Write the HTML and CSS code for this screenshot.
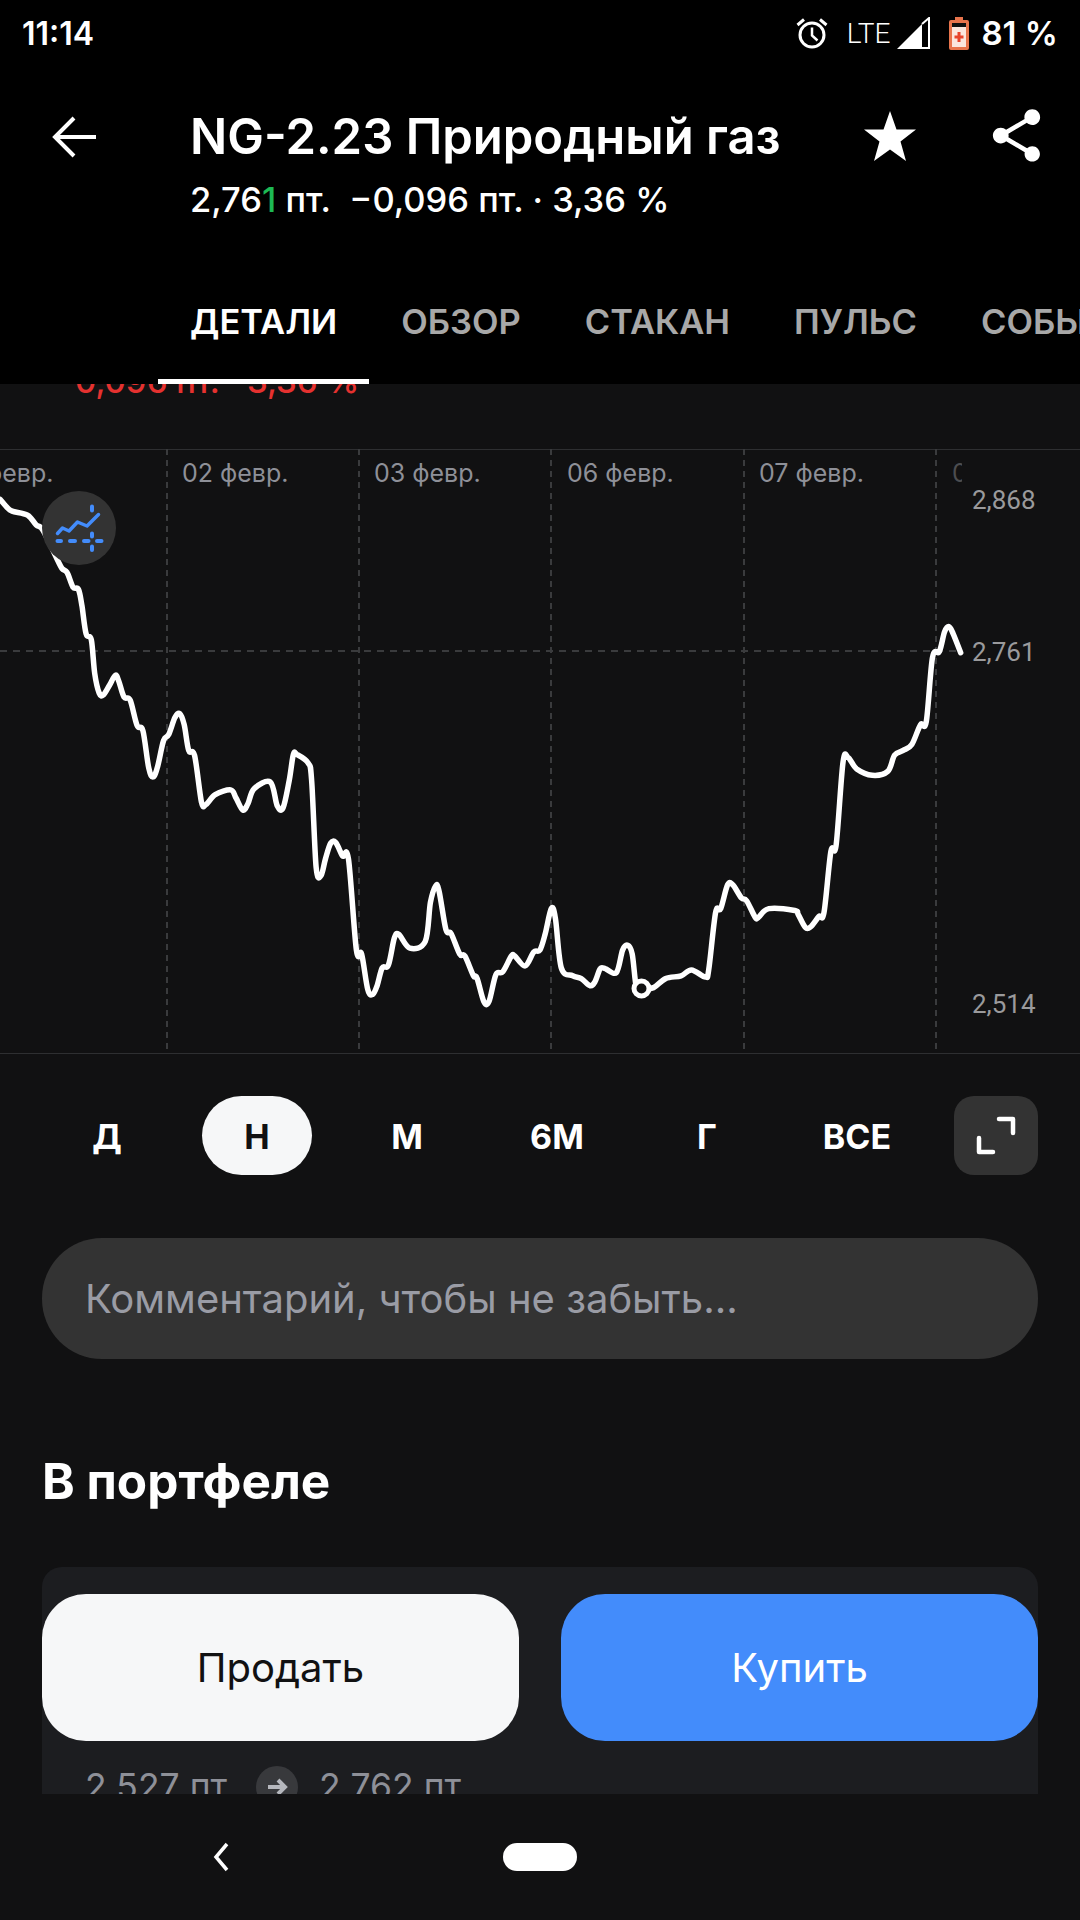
FILE: index.html
```html
<!DOCTYPE html>
<html lang="ru">
<head>
  <meta charset="UTF-8">
  <meta name="viewport" content="width=device-width, initial-scale=1.0">
  <title>NG-2.23 Природный газ</title>
  <link rel="stylesheet" href="styles.css">
</head>
<body>

<div class="app">

  <!-- Header -->
  <header class="header">
    <div class="status-bar">
      <span class="status-time">11:14</span>
      <div class="status-icons">
        <svg class="icon-alarm" width="34" height="34" viewBox="0 0 34 34">
          <circle cx="17" cy="19" r="12" fill="none" stroke="#fff" stroke-width="3"/>
          <path d="M17 11.500V19.500L22.500 24.500" fill="none" stroke="#fff" stroke-width="2.500"/>
          <path d="M2.500 9L9 3.500M31.500 9L25 3.500" fill="none" stroke="#fff" stroke-width="3"/>
        </svg>
        <span class="status-lte">LTE</span>
        <svg class="icon-signal" width="33" height="32" viewBox="0 0 33 32">
          <path d="M0 32L25 7V32Z" fill="#fff"/>
          <path d="M25 7L32 1V31H25" fill="none" stroke="#fff" stroke-width="2"/>
        </svg>
        <svg class="icon-battery" width="20" height="33" viewBox="0 0 20 33">
          <path d="M6 0H14V3H18Q20 3 20 5V31Q20 33 18 33H2Q0 33 0 31V5Q0 3 2 3H6Z" fill="#e8744c"/>
          <rect x="3" y="6" width="14" height="4" fill="#111"/>
          <rect x="3" y="10" width="14" height="20" fill="#fbe6de"/>
          <path d="M10 15V25M5.500 20H14.500" stroke="#e8442c" stroke-width="3"/>
        </svg>
        <span class="status-battery">81 %</span>
      </div>
    </div>

    <div class="topbar">
      <svg class="icon-back" width="47" height="44" viewBox="0 0 47 44">
        <path d="M45 22H5M23 3L4 22L23 41" fill="none" stroke="#fff" stroke-width="4"/>
      </svg>
      <div class="titles">
        <h1>NG-2.23 Природный газ</h1>
        <p class="quote">2,76<span class="quote-tick">1</span> пт.&nbsp;&nbsp;−0,096 пт. · 3,36 %</p>
      </div>
      <svg class="icon-star" width="52" height="50" viewBox="0 0 52 50">
        <path d="M26 0L32.500 18.500H52L36.500 30.500L42 50L26 38.500L10 50L15.500 30.500L0 18.500H19.500Z" fill="#fff"/>
      </svg>
      <svg class="icon-share" width="63" height="63" viewBox="0 0 24 24">
        <path fill="#fff" d="M18 16.080c-.76 0-1.440.3-1.960.77L8.910 12.700c.05-.23.09-.46.09-.7s-.04-.47-.09-.7l7.050-4.110c.54.5 1.250.81 2.040.81 1.660 0 3-1.340 3-3s-1.340-3-3-3-3 1.340-3 3c0 .24.04.47.09.7L8.040 9.810C7.500 9.310 6.790 9 6 9c-1.660 0-3 1.340-3 3s1.340 3 3 3c.79 0 1.500-.31 2.040-.81l7.120 4.160c-.05.21-.08.43-.08.65 0 1.610 1.310 2.920 2.920 2.920 1.610 0 2.920-1.310 2.920-2.920s-1.310-2.920-2.920-2.920z"/>
      </svg>
    </div>

    <nav class="tabs">
      <span class="tab active">ДЕТАЛИ</span>
      <span class="tab">ОБЗОР</span>
      <span class="tab">СТАКАН</span>
      <span class="tab">ПУЛЬС</span>
      <span class="tab">СОБЫТИЯ</span>
    </nav>
  </header>

  <!-- Scrolled content -->
  <main class="content">
    <p class="change">−0,096 пт. · 3,36 %</p>

    <div class="chart">
      <svg class="chart-svg" width="1080" height="605" viewBox="0 0 1080 605">
        <g class="grid-v">
          <line x1="167" y1="0" x2="167" y2="605"/>
          <line x1="359" y1="0" x2="359" y2="605"/>
          <line x1="551" y1="0" x2="551" y2="605"/>
          <line x1="744" y1="0" x2="744" y2="605"/>
          <line x1="936" y1="0" x2="936" y2="605"/>
        </g>
        <line class="grid-h" x1="0" y1="202" x2="962" y2="202"/>
        <path id="priceLine" class="price-line" d=""/>
        <circle class="price-dot" cx="641.500" cy="539.500" r="7.500"/>
      </svg>

      <div class="dates">
        <span class="date">01 февр.</span>
        <span class="date">02 февр.</span>
        <span class="date">03 февр.</span>
        <span class="date">06 февр.</span>
        <span class="date">07 февр.</span>
        <span class="date">08 февр.</span>
      </div>

      <span class="price-label label-high">2,868</span>
      <span class="price-label label-now">2,761</span>
      <span class="price-label label-low">2,514</span>

      <div class="indicator-btn">
        <svg width="74" height="74" viewBox="0 0 74 74">
          <path d="M15.500 42.500L20.500 37L27 40L35.500 31L45 35L56.500 23.500" fill="none" stroke="#438cfb" stroke-width="3.500" stroke-linecap="round" stroke-linejoin="round"/>
          <path d="M15.500 50H19M28 50H33M42 50H46.500M55 50H59.500M50 15.500V19.500M50 42.500V45.500M50 55.500V59" fill="none" stroke="#438cfb" stroke-width="4" stroke-linecap="round"/>
        </svg>
      </div>
    </div>

    <div class="periods">
      <span class="period">Д</span>
      <span class="period active">Н</span>
      <span class="period">М</span>
      <span class="period">6М</span>
      <span class="period">Г</span>
      <span class="period">ВСЕ</span>
      <div class="expand-btn">
        <svg width="84" height="79" viewBox="0 0 84 79">
          <path d="M45 23H59V37M25 42V56H39" fill="none" stroke="#fff" stroke-width="4.500" stroke-linecap="round" stroke-linejoin="round"/>
        </svg>
      </div>
    </div>

    <div class="comment">Комментарий, чтобы не забыть...</div>

    <h2>В портфеле</h2>

    <div class="card">
      <div class="actions">
        <button class="btn btn-sell">Продать</button>
        <button class="btn btn-buy">Купить</button>
      </div>
      <div class="range">
        <span>2,527 пт.</span>
        <span class="range-arrow">
          <svg width="42" height="42" viewBox="0 0 42 42">
            <path d="M12 21H29M22 14L29 21L22 28" fill="none" stroke="#b5b7bd" stroke-width="4"/>
          </svg>
        </span>
        <span>2,762 пт.</span>
      </div>
    </div>
  </main>

  <!-- System navigation -->
  <footer class="navbar">
    <svg class="nav-back" width="20" height="30" viewBox="0 0 20 30">
      <path d="M16 2L5 15L16 28" fill="none" stroke="#fff" stroke-width="3.500"/>
    </svg>
    <div class="nav-home"></div>
  </footer>
</div>

<script>
  // price series, traced in 1/1000 of a chart unit
  const series = [
    [0,150],[20,170],[35,180],[80,190],[105,215],[125,228],[165,300],[180,325],[195,335],[212,372],[228,378],
    [238,420],[250,490],[265,505],[275,590],[288,640],[300,645],[318,620],[335,595],[345,610],[360,650],[378,658],
    [398,722],[415,735],[432,830],[445,852],[458,825],[475,760],[490,745],[508,702],[522,692],[535,720],[548,785],
    [565,798],[585,915],[598,922],[625,897],[670,885],[685,905],[705,936],[720,920],[738,882],[785,865],[805,925],
    [822,930],[840,860],[852,795],[862,795],[895,817],[905,860],[918,1080],[932,1102],[945,1060],[960,1020],[975,1018],
    [995,1052],[1012,1060],[1035,1290],[1050,1300],[1068,1390],[1082,1402],[1095,1380],[1110,1335],[1128,1328],
    [1145,1260],[1158,1250],[1190,1285],[1235,1268],[1250,1170],[1265,1128],[1275,1140],[1295,1238],[1310,1248],
    [1335,1300],[1350,1305],[1375,1355],[1385,1360],[1405,1420],[1420,1420],[1440,1352],[1460,1345],[1485,1305],
    [1495,1305],[1525,1330],[1550,1295],[1568,1290],[1583,1250],[1601,1185],[1613,1210],[1630,1335],[1663,1355],
    [1688,1362],[1713,1380],[1728,1370],[1743,1337],[1758,1337],[1790,1347],[1808,1290],[1823,1278],[1836,1300],
    [1848,1385],[1863,1387],[1898,1385],[1933,1362],[1978,1355],[2008,1340],[2048,1358],[2058,1340],[2078,1195],
    [2093,1185],[2113,1125],[2128,1125],[2153,1158],[2168,1165],[2193,1207],[2203,1207],[2233,1185],[2308,1190],
    [2318,1200],[2338,1232],[2353,1232],[2378,1205],[2393,1195],[2413,1040],[2428,1025],[2448,815],[2463,803],
    [2488,832],[2533,848],[2578,838],[2598,797],[2623,785],[2648,770],[2673,720],[2690,712],[2708,550],[2728,535],
    [2743,485],[2756,472],[2768,490],[2790,538]
  ];

  function buildPath(points) {
    const xy = points.map(p => [p[0] / 2.904, p[1] / 2.529 - 9]);
    let d = `M${xy[0][0].toFixed(1)} ${xy[0][1].toFixed(1)}`;
    for (let i = 0; i < xy.length - 1; i++) {
      const p0 = xy[i - 1] || xy[i];
      const p1 = xy[i];
      const p2 = xy[i + 1];
      const p3 = xy[i + 2] || p2;
      const c1x = p1[0] + (p2[0] - p0[0]) / 6;
      const c1y = p1[1] + (p2[1] - p0[1]) / 6;
      const c2x = p2[0] - (p3[0] - p1[0]) / 6;
      const c2y = p2[1] - (p3[1] - p1[1]) / 6;
      d += `C${c1x.toFixed(1)} ${c1y.toFixed(1)} ${c2x.toFixed(1)} ${c2y.toFixed(1)} ${p2[0].toFixed(1)} ${p2[1].toFixed(1)}`;
    }
    return d;
  }

  document.getElementById('priceLine').setAttribute('d', buildPath(series));
</script>

</body>
</html>
```

FILE: styles.css
```css
/* Global Styling */
* {
  box-sizing: border-box;
  margin: 0;
  padding: 0;
}
body {
  font-family: Inter, "Noto Sans", sans-serif;
  background-color: #111112;
  color: #fff;
}
.app {
  width: 1080px;
  height: 1920px;
  display: flex;
  flex-direction: column;
  overflow: hidden;
}

/* Header */
.header {
  height: 384px;
  flex-shrink: 0;
  background-color: #000;
  display: flex;
  flex-direction: column;
  position: relative;
  z-index: 1;
}
.status-bar {
  height: 66px;
  padding: 0 22px;
  display: flex;
  justify-content: space-between;
  align-items: center;
}
.status-time {
  font-size: 32px;
  font-weight: 600;
}
.status-icons {
  display: flex;
  align-items: center;
}
.status-lte {
  font-family: Roboto, sans-serif;
  font-size: 28px;
  font-weight: 300;
  margin-left: 18px;
}
.icon-signal {
  margin-left: 7px;
}
.icon-battery {
  margin-left: 19px;
}
.status-battery {
  font-size: 33px;
  font-weight: 600;
  margin-left: 12px;
}

/* Title row */
.topbar {
  display: flex;
  padding: 41px 32px 0 0;
}
.icon-back {
  margin: 8px 92px 0 51px;
}
.titles {
  flex: 1;
}
h1 {
  font-size: 49px;
  font-weight: 600;
  line-height: 60px;
}
.quote {
  font-size: 34.500px;
  font-weight: 500;
  line-height: 44px;
  margin-top: 11px;
}
.quote-tick {
  color: #1db954;
}
.icon-star {
  margin: 4px 69px 0 0;
}
.icon-share {
  margin-top: -3px;
}

/* Tabs */
.tabs {
  display: flex;
  margin-top: auto;
  padding-left: 158px;
  white-space: nowrap;
}
.tab {
  padding: 0 32px;
  height: 81px;
  font-size: 34.500px;
  font-weight: 600;
  line-height: 38px;
  color: #a8a8a8;
  border-bottom: 5px solid transparent;
}
.tab.active {
  color: #fff;
  border-bottom-color: #fff;
}

/* Content */
.content {
  flex: 1;
  overflow: hidden;
}
.change {
  margin: -23px 0 48px 53px;
  height: 40px;
  font-size: 33px;
  font-weight: 500;
  line-height: 40px;
  color: #e5312f;
}

/* Chart */
.chart {
  height: 605px;
  position: relative;
  border-top: 1px solid #2e2f31;
  border-bottom: 1px solid #2e2f31;
}
.chart-svg {
  position: absolute;
  left: 0;
  top: -1px;
}
.grid-v line {
  stroke: #3a3b3d;
  stroke-width: 2;
  stroke-dasharray: 6 5;
}
.grid-h {
  stroke: #3a3b3d;
  stroke-width: 2;
  stroke-dasharray: 7 6;
}
.price-line {
  fill: none;
  stroke: #fff;
  stroke-width: 5.500;
  stroke-linecap: round;
  stroke-linejoin: round;
}
.price-dot {
  fill: #111112;
  stroke: #fff;
  stroke-width: 5;
}
.dates {
  position: absolute;
  left: 0;
  top: 3px;
  width: 962px;
  height: 40px;
  overflow: hidden;
}
.date {
  position: absolute;
  top: 0;
  font-size: 25px;
  line-height: 40px;
  color: #8e9098;
  white-space: nowrap;
}
.date:nth-child(1) { left: -48px; }
.date:nth-child(2) { left: 182px; }
.date:nth-child(3) { left: 374px; }
.date:nth-child(4) { left: 567px; }
.date:nth-child(5) { left: 759px; }
.date:nth-child(6) { left: 952px; color: #4c4d50; }
.price-label {
  position: absolute;
  left: 972px;
  font-family: Roboto, sans-serif;
  font-size: 26px;
  line-height: 30px;
  color: #9a9a9c;
}
.label-high { top: 35px; }
.label-now { top: 187px; }
.label-low { top: 539px; }
.indicator-btn {
  position: absolute;
  left: 42px;
  top: 41px;
  width: 74px;
  height: 74px;
  border-radius: 50%;
  background-color: #333;
}

/* Period switcher */
.periods {
  display: flex;
  align-items: center;
  height: 79px;
  margin: 42px 42px 0 32px;
}
.period {
  width: 150px;
  height: 79px;
  flex-shrink: 0;
  text-align: center;
  font-size: 34px;
  font-weight: 700;
  line-height: 81px;
}
.period.active {
  width: 110px;
  margin: 0 20px;
  border-radius: 40px;
  background-color: #f6f7f8;
  color: #111112;
}
.expand-btn {
  margin-left: auto;
  width: 84px;
  height: 79px;
  border-radius: 20px;
  background-color: #333;
}

/* Comment field */
.comment {
  margin: 63px 42px 0;
  height: 121px;
  padding-left: 43px;
  border-radius: 60px;
  background-color: #333;
  color: #9a9ca5;
  font-size: 40px;
  line-height: 121px;
}

h2 {
  margin: 92px 42px 0;
  font-size: 49.500px;
  font-weight: 700;
  line-height: 60px;
}

/* Portfolio card */
.card {
  margin: 56px 42px 0;
  padding-top: 27px;
  height: 300px;
  border-radius: 20px;
  background-color: #1c1d20;
}
.actions {
  display: flex;
  gap: 42px;
}
.btn {
  flex: 1;
  height: 147px;
  border: none;
  border-radius: 44px;
  font-family: inherit;
  font-size: 40px;
}
.btn-sell {
  background-color: #f6f7f8;
  color: #111112;
}
.btn-buy {
  background-color: #438cfb;
  color: #fff;
}
.range {
  display: flex;
  align-items: center;
  margin-top: 25px;
  padding-left: 43px;
  gap: 21px;
  color: #8e9098;
  font-size: 35.500px;
  line-height: 42px;
}
.range-arrow {
  width: 42px;
  height: 42px;
  border-radius: 50%;
  background-color: #38393c;
}

/* System navigation */
.navbar {
  height: 126px;
  flex-shrink: 0;
  background-color: #111112;
  display: flex;
  align-items: center;
  padding-left: 211px;
  position: relative;
  z-index: 1;
}
.nav-home {
  width: 74px;
  height: 28px;
  margin-left: 272px;
  border-radius: 14px;
  background-color: #fff;
}
```
